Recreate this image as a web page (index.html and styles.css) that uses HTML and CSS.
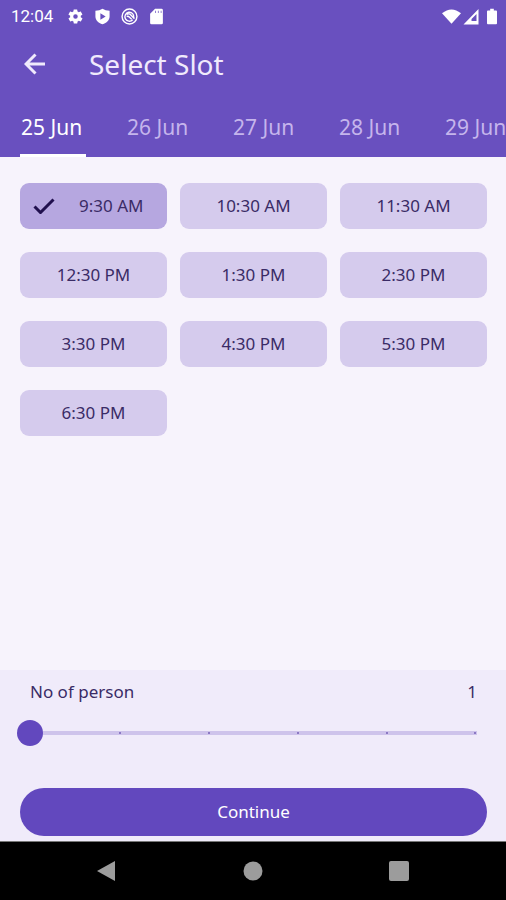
FILE: index.html
```html
<!DOCTYPE html>
<html lang="en">
<head>
<meta charset="utf-8">
<meta name="viewport" content="width=device-width, initial-scale=1">
<title>Select Slot</title>
<link rel="stylesheet" href="styles.css">
</head>
<body>
<header class="header">
  <div class="status">
    <span class="clock">12:04</span>
    <svg class="status-icon" viewBox="0 0 24 24" aria-hidden="true"><path fill-rule="evenodd" d="M19.4 13c0-.3.1-.6.1-1s0-.7-.1-1l2.100-1.600c.2-.2.300-.4.1-.6l-2-3.500c-.1-.2-.4-.3-.6-.2l-2.500 1c-.5-.4-1.100-.7-1.700-1l-.4-2.600c0-.3-.2-.5-.5-.5h-4c-.2 0-.5.2-.5.4l-.4 2.700c-.6.200-1.100.6-1.700 1l-2.500-1c-.2-.1-.5 0-.6.2l-2 3.500c-.1.2-.1.5.1.6L4.500 11c0 .3-.1.7-.1 1s0 .7.100 1l-2.100 1.600c-.2.2-.3.400-.1.600l2 3.500c.1.2.4.3.6.2l2.500-1c.5.4 1.100.7 1.700 1l.4 2.600c0 .3.3.5.5.5h4c.3 0 .5-.2.5-.4l.4-2.700c.6-.2 1.100-.6 1.700-1l2.500 1c.2.1.5 0 .6-.2l2-3.500c.1-.2.1-.5-.1-.6zM12 15.200a3.200 3.200 0 1 1 0-6.400 3.200 3.200 0 0 1 0 6.400z"/></svg>
    <svg class="status-icon" viewBox="0 0 24 24" aria-hidden="true"><path fill-rule="evenodd" d="M12 1Q8 4 2 4v8c0 5 4 9 10 11 6-2 10-6 10-11V4q-6 0-10-3zM9 7.500l7.500 4.500L9 16.500z"/></svg>
    <svg class="status-icon outline" viewBox="0 0 24 24" aria-hidden="true"><circle cx="12" cy="12" r="10.500"/><path d="M16.500 16.500A6.300 6.300 0 1 1 18 13.500M8 9q4-2 6 1l5 5M8 12q2-1 4 1l3 3"/></svg>
    <svg class="status-icon" viewBox="0 0 24 24" aria-hidden="true"><path fill-rule="evenodd" d="M10 1h9q2 0 2 2v18q0 2-2 2H5q-2 0-2-2V8zM10 4v3h1V4zm4 0v3h1V4zm4 0v3h1V4z"/></svg>
    <span class="signals">
      <svg class="wifi" viewBox="0 0 20 17" aria-hidden="true"><path d="M0 5Q10-3 20 5L10 16z"/></svg>
      <svg class="cell" viewBox="0 0 16 17" aria-hidden="true"><path fill-rule="evenodd" d="M15.500 1v15.500H.5zM13.500 6v7H8.500V11z"/></svg>
      <svg class="battery" viewBox="0 0 11 17" aria-hidden="true"><path d="M3.500 0h4v2H10q1 0 1 1v13q0 1-1 1H1q-1 0-1-1V3q0-1 1-1h2.500z"/></svg>
    </span>
  </div>
  <div class="appbar">
    <button class="back" type="button" aria-label="Back"><svg viewBox="0 0 22 22" aria-hidden="true"><path d="M21 11H2.500M11.500 1.500L2 11l9.500 9.500"/></svg></button>
    <h1 class="title">Select Slot</h1>
  </div>
  <nav class="tabs" aria-label="Date">
    <a class="tab active" href="#d25" aria-current="date">25 Jun</a>
    <a class="tab" href="#d26">26 Jun</a>
    <a class="tab" href="#d27">27 Jun</a>
    <a class="tab" href="#d28">28 Jun</a>
    <a class="tab" href="#d29">29 Jun</a>
  </nav>
</header>
<main class="slots">
  <button class="slot selected" type="button" aria-pressed="true"><svg class="check" viewBox="0 0 22 16" aria-hidden="true"><path d="M1.500 8.500L7.500 14.500 20.500 1.500"/></svg>9:30 AM</button>
  <button class="slot" type="button">10:30 AM</button>
  <button class="slot" type="button">11:30 AM</button>
  <button class="slot" type="button">12:30 PM</button>
  <button class="slot" type="button">1:30 PM</button>
  <button class="slot" type="button">2:30 PM</button>
  <button class="slot" type="button">3:30 PM</button>
  <button class="slot" type="button">4:30 PM</button>
  <button class="slot" type="button">5:30 PM</button>
  <button class="slot" type="button">6:30 PM</button>
</main>
<section class="panel">
  <div class="person">
    <label for="persons">No of person</label>
    <output for="persons">1</output>
  </div>
  <input class="slider" id="persons" type="range" min="1" max="6" step="1" value="1">
  <button class="continue" type="button">Continue</button>
</section>
<footer class="navbar">
  <button class="nav" type="button" aria-label="Back"><svg viewBox="0 0 20 22" aria-hidden="true"><path d="M18 1v20L0 11z"/></svg></button>
  <button class="nav" type="button" aria-label="Home"><svg viewBox="0 0 20 22" aria-hidden="true"><circle cx="10" cy="11" r="9.500"/></svg></button>
  <button class="nav" type="button" aria-label="Recent apps"><svg viewBox="0 0 20 22" aria-hidden="true"><rect y="1" width="20" height="20" rx="2"/></svg></button>
</footer>
</body>
</html>
```

FILE: styles.css
```css
* {
  box-sizing: border-box;
}

body {
  display: flex;
  flex-direction: column;
  min-height: 100vh;
  margin: 0;
  background: #f7f3fc;
  color: #3a2b66;
  font-family: "Noto Sans", sans-serif;
  font-size: 17px;
  line-height: 24px;
}

button {
  padding: 0;
  border: 0;
  background: none;
  color: inherit;
  font: inherit;
  cursor: pointer;
}

svg {
  display: block;
  flex: none;
}

.header {
  background: #6950bf;
  color: #fff;
}

.status {
  display: flex;
  align-items: center;
  gap: 10px;
  height: 32px;
  padding: 0 9px 0 11px;
}

.clock {
  margin-right: 4px;
  font-family: Roboto, sans-serif;
}

.status-icon {
  width: 17px;
  height: 17px;
  fill: #fff;
}

.status-icon.outline {
  fill: none;
  stroke: #fff;
  stroke-width: 2;
}

.signals {
  display: flex;
  gap: 2px;
  margin-left: auto;
  fill: #fff;
}

.wifi {
  width: 19px;
  height: 17px;
}

.cell {
  width: 16px;
  height: 17px;
}

.battery {
  width: 10px;
  height: 17px;
  margin-left: 6px;
}

.appbar {
  display: flex;
  align-items: center;
  gap: 43px;
  height: 64px;
  padding: 0 24px;
}

.back svg {
  width: 22px;
  height: 22px;
  fill: none;
  stroke: #f0eafc;
  stroke-width: 3;
}

.title {
  margin: 0;
  color: #f0eafc;
  font-size: 28px;
  font-weight: 400;
  line-height: 36px;
}

.tabs {
  display: flex;
  gap: 40px;
  height: 61px;
  padding: 0 20px;
  overflow: hidden;
}

.tab {
  flex: none;
  min-width: 66px;
  padding: 17px 1px 0;
  border-bottom: 3px solid transparent;
  color: #c5b5ec;
  font-size: 21px;
  line-height: 28px;
  text-decoration: none;
}

.tab.active {
  border-color: #fff;
  color: #fff;
}

.slots {
  display: grid;
  flex: 1;
  grid-template-columns: repeat(3, 1fr);
  align-content: start;
  gap: 23px 13px;
  padding: 26px 19px 26px 20px;
}

.slot {
  display: flex;
  align-items: center;
  justify-content: center;
  height: 46px;
  border-radius: 9px;
  background: #d5cbed;
}

.slot.selected {
  justify-content: flex-start;
  gap: 24px;
  padding-left: 13px;
  background: #b6a7e0;
}

.check {
  width: 22px;
  height: 16px;
  fill: none;
  stroke: #21104e;
  stroke-width: 3;
}

.panel {
  display: flex;
  flex-direction: column;
  padding: 10px 19px 5px 20px;
  background: #f0ebfa;
}

.person {
  display: flex;
  justify-content: space-between;
  padding: 0 10px;
}

.slider {
  height: 26px;
  margin: 16px -3px 42px;
  appearance: none;
  background: none;
}

.slider::-webkit-slider-runnable-track {
  --tick: linear-gradient(#8c79c4, #8c79c4);
  --span: calc(100% - 26px);
  height: 26px;
  background:
    var(--tick) calc(13px + (100% - 26px) * 0.2) 50% / 2px 2px no-repeat,
    var(--tick) calc(13px + (100% - 26px) * 0.4) 50% / 2px 2px no-repeat,
    var(--tick) calc(13px + (100% - 26px) * 0.6) 50% / 2px 2px no-repeat,
    var(--tick) calc(13px + (100% - 26px) * 0.8) 50% / 2px 2px no-repeat,
    var(--tick) calc(100% - 14px) 50% / 2px 2px no-repeat,
    linear-gradient(#cec3eb, #cec3eb) 50% 50% / var(--span) 4px no-repeat;
}

.slider::-webkit-slider-thumb {
  width: 26px;
  height: 26px;
  appearance: none;
  border-radius: 50%;
  background: #6248be;
}

.continue {
  height: 48px;
  border-radius: 24px;
  background: #6248be;
  color: #fff;
}

.navbar {
  display: flex;
  align-items: center;
  justify-content: center;
  gap: 126px;
  height: 59px;
  border-top: 1px solid #777;
  background: #000;
}

.nav svg {
  width: 20px;
  height: 22px;
  fill: #9c9c9c;
}
```
